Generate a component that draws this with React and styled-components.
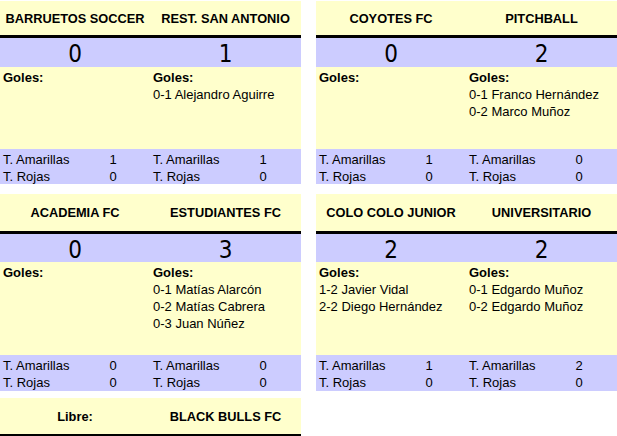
import React from "react";
import styled, { createGlobalStyle } from "styled-components";

const rounds = [
  {
    gap: 10,
    headHeight: 34,
    scoreHeight: 29,
    goalsHeight: 82,
    cardsHeight: 35,
    matches: [
      {
        home: { name: "BARRUETOS SOCCER", score: 0, goals: [], yellow: 1, red: 0 },
        away: {
          name: "REST. SAN ANTONIO",
          score: 1,
          goals: ["0-1 Alejandro Aguirre"],
          yellow: 1,
          red: 0,
        },
      },
      {
        home: { name: "COYOTES FC", score: 0, goals: [], yellow: 1, red: 0 },
        away: {
          name: "PITCHBALL",
          score: 2,
          goals: ["0-1 Franco Hernández", "0-2 Marco Muñoz"],
          yellow: 0,
          red: 0,
        },
      },
    ],
  },
  {
    gap: 7,
    headHeight: 37,
    scoreHeight: 28,
    goalsHeight: 93,
    cardsHeight: 36,
    matches: [
      {
        home: { name: "ACADEMIA FC", score: 0, goals: [], yellow: 0, red: 0 },
        away: {
          name: "ESTUDIANTES FC",
          score: 3,
          goals: ["0-1 Matías Alarcón", "0-2 Matías Cabrera", "0-3 Juan Núñez"],
          yellow: 0,
          red: 0,
        },
      },
      {
        home: {
          name: "COLO COLO JUNIOR",
          score: 2,
          goals: ["1-2 Javier Vidal", "2-2 Diego Hernández"],
          yellow: 1,
          red: 0,
        },
        away: {
          name: "UNIVERSITARIO",
          score: 2,
          goals: ["0-1 Edgardo Muñoz", "0-2 Edgardo Muñoz"],
          yellow: 2,
          red: 0,
        },
      },
    ],
  },
];

const Side = ({ team }) => (
  <GoalsCell>
    <GoalsTitle>Goles:</GoalsTitle>
    {team.goals.map((g, i) => (
      <Line key={i}>{g}</Line>
    ))}
  </GoalsCell>
);

const CardsSide = ({ team }) => (
  <CardsCell>
    <Label>T. Amarillas</Label>
    <Num>{team.yellow}</Num>
    <Label>T. Rojas</Label>
    <Num>{team.red}</Num>
  </CardsCell>
);

const Match = ({ match, round }) => (
  <Card>
    <Header $h={round.headHeight}>
      <TeamName>{match.home.name}</TeamName>
      <TeamName>{match.away.name}</TeamName>
    </Header>
    <ScoreRow $h={round.scoreHeight}>
      <Score>{match.home.score}</Score>
      <Score>{match.away.score}</Score>
    </ScoreRow>
    <GoalsRow $h={round.goalsHeight}>
      <Side team={match.home} />
      <Side team={match.away} />
    </GoalsRow>
    <CardsRow $h={round.cardsHeight}>
      <CardsSide team={match.home} />
      <CardsSide team={match.away} />
    </CardsRow>
  </Card>
);

const App = () => {
  return (
    <>
      <GlobalStyle />
      <Page>
        {rounds.map((round, i) => (
          <Round key={i} $gap={round.gap}>
            {round.matches.map((m, j) => (
              <Match key={j} match={m} round={round} />
            ))}
          </Round>
        ))}
        <Round $gap={0}>
          <Header $h={36}>
            <TeamName>Libre:</TeamName>
            <TeamName>BLACK BULLS FC</TeamName>
          </Header>
        </Round>
      </Page>
    </>
  );
};

export default App;

const GlobalStyle = createGlobalStyle`
  html, body {
    margin: 0;
    padding: 0;
    background: #ffffff;
  }
  body {
    font-family: "Liberation Sans", Arial, sans-serif;
    color: #000000;
  }
`;

const Page = styled.div`
  width: 617px;
  padding-top: 1px;
  display: flex;
  flex-direction: column;
`;

const Round = styled.div`
  display: grid;
  grid-template-columns: 301px 301px;
  column-gap: 15px;
  margin-bottom: ${(p) => p.$gap}px;
`;

const Card = styled.div`
  display: flex;
  flex-direction: column;
`;

const Halves = styled.div`
  display: grid;
  grid-template-columns: 150px 151px;
  height: ${(p) => p.$h}px;
`;

const Header = styled(Halves)`
  background: #ffffcc;
  border-bottom: 3px solid #000000;
  align-items: center;
`;

const TeamName = styled.div`
  text-align: center;
  font-weight: bold;
  font-size: 12.8px;
  white-space: nowrap;
`;

const ScoreRow = styled(Halves)`
  background: #ccccff;
  align-items: center;
`;

const Score = styled.div`
  text-align: center;
  font-family: "DejaVu Sans Condensed", "DejaVu Sans", Verdana, sans-serif;
  font-size: 24px;
  line-height: 28px;
  padding-top: 2px;
`;

const GoalsRow = styled(Halves)`
  background: #ffffcc;
`;

const GoalsCell = styled.div`
  padding: 2px 0 0 3px;
  font-size: 13px;
  line-height: 17px;
`;

const GoalsTitle = styled.div`
  font-weight: bold;
`;

const Line = styled.div`
  white-space: nowrap;
`;

const CardsRow = styled(Halves)`
  background: #ccccff;
`;

const CardsCell = styled.div`
  display: grid;
  grid-template-columns: 97px 26px;
  grid-auto-rows: 17px;
  padding: 2px 0 0 3px;
  font-size: 13px;
  line-height: 17px;
`;

const Label = styled.div`
  white-space: nowrap;
`;

const Num = styled.div`
  text-align: center;
`;
